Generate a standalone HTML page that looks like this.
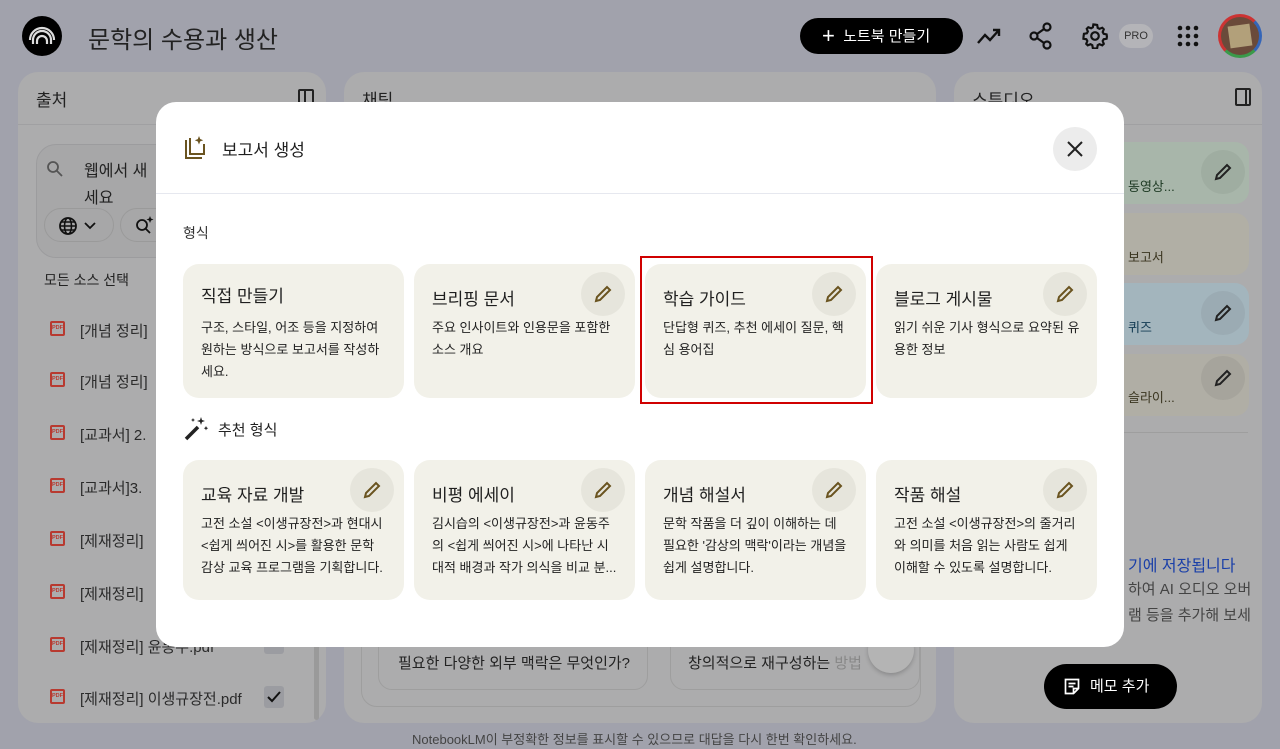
<!DOCTYPE html>
<html><head><meta charset="utf-8"><style>
*{box-sizing:border-box;margin:0;padding:0}
body{width:1280px;height:749px;overflow:hidden;background:#a1a2ac;font-family:"Liberation Sans","Noto Sans CJK KR",sans-serif;color:#1f1f1f;position:relative}
.abs{position:absolute}
.panel{position:absolute;background:#acacad;border-radius:20px;top:72px;height:651px}
.t{color:#222}
.card{position:absolute;background:#f2f1e9;border-radius:16px;width:221px}
.card h3{position:absolute;left:18px;top:18px;font-size:17px;font-weight:400;color:#1f1f1f}
.card p{position:absolute;left:18px;top:53px;right:16px;font-size:13px;line-height:22px;color:#222}
.pen{position:absolute;right:10px;top:8px;width:44px;height:44px;border-radius:50%;background:#e6e5dc}
.pen svg{position:absolute;left:12px;top:12px}
.pdf{position:absolute;left:50px;width:15px;height:15px;border:2px solid #b83a30;border-radius:2px;font-size:5.5px;color:#b83a30;font-weight:bold;line-height:11px;text-align:center;font-family:"Liberation Sans",sans-serif}
.src{position:absolute;left:80px;font-size:15px;color:#2a2a2a}
.sc{position:absolute;left:1124px;width:125px;height:62px;border-radius:0 14px 14px 0}
.sp{position:absolute;left:1201px;width:44px;height:44px;border-radius:50%}
.sp svg{position:absolute;left:12px;top:12px}
.sl{position:absolute;left:1128px;font-size:13px}
</style></head><body>
<!-- header -->
<div class="abs" style="left:22px;top:16px;width:40px;height:40px;border-radius:50%;background:#000">
<svg width="40" height="40" viewBox="0 0 40 40"><path d="M11 28v-4a9 9 0 0 1 18 0v4M15 28v-3a5 5 0 0 1 10 0v3M8 24a12 12 0 0 1 24 0" fill="none" stroke="#ddd" stroke-width="2.2"/></svg></div>
<div class="abs t" style="left:88px;top:20px;font-size:24px">문학의 수용과 생산</div>
<div class="abs" style="left:800px;top:18px;width:163px;height:36px;border-radius:18px;background:#000;color:#fff;font-size:15px;line-height:36px;padding-left:22px"><span style="font-size:22px;vertical-align:-2px">+</span>&nbsp; 노트북 만들기</div>
<svg class="abs" style="left:976px;top:24px" width="26" height="24" viewBox="0 0 26 24"><path d="M2 19l7-8 5 5 9-10M17 6h6v6" fill="none" stroke="#111" stroke-width="2.4"/></svg>
<svg class="abs" style="left:1028px;top:22px" width="26" height="28" viewBox="0 0 26 28"><circle cx="19" cy="5" r="3.5" fill="none" stroke="#111" stroke-width="2.2"/><circle cx="6" cy="14" r="3.5" fill="none" stroke="#111" stroke-width="2.2"/><circle cx="19" cy="23" r="3.5" fill="none" stroke="#111" stroke-width="2.2"/><path d="M9 12l7-5M9 16l7 5" stroke="#111" stroke-width="2.2"/></svg>
<svg class="abs" style="left:1082px;top:23px" width="26" height="26" viewBox="0 0 24 24"><path d="M12 1.5l2 .3.5 2.7 1.6.9 2.6-1 1.4 1.4-1 2.6.9 1.6 2.7.5.3 2-.3 2-2.7.5-.9 1.6 1 2.6-1.4 1.4-2.6-1-1.6.9-.5 2.7-2 .3-2-.3-.5-2.7-1.6-.9-2.6 1-1.4-1.4 1-2.6-.9-1.6-2.7-.5L1.5 12l.3-2 2.7-.5.9-1.6-1-2.6 1.4-1.4 2.6 1 1.6-.9.5-2.7z" fill="none" stroke="#111" stroke-width="2"/><circle cx="12" cy="12" r="3.5" fill="none" stroke="#111" stroke-width="2"/></svg>
<div class="abs" style="left:1119px;top:24px;width:34px;height:24px;border-radius:12px;background:#b4b4b8;font-size:11px;line-height:24px;text-align:center;color:#333">PRO</div>
<svg class="abs" style="left:1177px;top:25px" width="22" height="22"><g fill="#111"><circle cx="3" cy="3" r="2.3"/><circle cx="11" cy="3" r="2.3"/><circle cx="19" cy="3" r="2.3"/><circle cx="3" cy="11" r="2.3"/><circle cx="11" cy="11" r="2.3"/><circle cx="19" cy="11" r="2.3"/><circle cx="3" cy="19" r="2.3"/><circle cx="11" cy="19" r="2.3"/><circle cx="19" cy="19" r="2.3"/></g></svg>
<div class="abs" style="left:1218px;top:14px;width:44px;height:44px;border-radius:50%;border:3px solid #c33;border-right-color:#3465b8;border-bottom-color:#3a9a4a;background:#6a4a3a"><div style="margin:8px;width:22px;height:22px;background:#b2a07a;transform:rotate(-8deg)"></div></div>

<!-- left panel -->
<div class="panel" style="left:18px;width:308px">
<div class="abs t" style="left:18px;top:14px;font-size:17px">출처</div>
<div class="abs" style="left:280px;top:17px;width:16px;height:18px;border:2px solid #222;border-radius:2px"><div style="margin-left:4px;width:2px;height:14px;background:#222"></div></div>
<div class="abs" style="left:0;top:52px;width:308px;height:1px;background:#a0a0a2"></div>
<div class="abs" style="left:18px;top:72px;width:290px;height:114px;border-radius:20px;background:#a7a7a8;border:1px solid #9c9c9e"></div>
<svg class="abs" style="left:28px;top:88px" width="18" height="18" viewBox="0 0 18 18"><circle cx="7" cy="7" r="5" fill="none" stroke="#555" stroke-width="1.8"/><path d="M11 11l5 5" stroke="#555" stroke-width="1.8"/></svg>
<div class="abs t" style="left:66px;top:86px;font-size:16px;line-height:27px">웹에서 새<br>세요</div>
<div class="abs" style="left:26px;top:136px;width:70px;height:34px;border-radius:17px;border:1px solid #9a9a9a"></div>
<svg class="abs" style="left:40px;top:144px" width="20" height="20" viewBox="0 0 20 20"><circle cx="10" cy="10" r="8" fill="none" stroke="#111" stroke-width="1.8"/><ellipse cx="10" cy="10" rx="3.5" ry="8" fill="none" stroke="#111" stroke-width="1.6"/><path d="M2 10h16M3.5 6h13M3.5 14h13" stroke="#111" stroke-width="1.4"/></svg>
<svg class="abs" style="left:66px;top:150px" width="12" height="8"><path d="M1 1l5 5 5-5" fill="none" stroke="#111" stroke-width="1.8"/></svg>
<div class="abs" style="left:102px;top:136px;width:60px;height:34px;border-radius:17px;border:1px solid #9a9a9a"></div>
<svg class="abs" style="left:116px;top:143px" width="22" height="22" viewBox="0 0 22 22"><circle cx="8" cy="10" r="5" fill="none" stroke="#111" stroke-width="1.8"/><path d="M12 14l4 4" stroke="#111" stroke-width="1.8"/><path d="M16 1l1 2.5 2.5 1-2.5 1-1 2.5-1-2.5-2.5-1 2.5-1z" fill="#111"/></svg>
<div class="abs t" style="left:26px;top:198px;font-size:14px">모든 소스 선택</div>
<div class="abs" style="left:296px;top:560px;width:5px;height:88px;background:#9a9a9a;border-radius:3px"></div>
</div>
<div class="pdf" style="top:321px">PDF</div><div class="src" style="top:320px">[개념 정리]</div>
<div class="pdf" style="top:372px">PDF</div><div class="src" style="top:371px">[개념 정리]</div>
<div class="pdf" style="top:425px">PDF</div><div class="src" style="top:424px">[교과서] 2.</div>
<div class="pdf" style="top:478px">PDF</div><div class="src" style="top:477px">[교과서]3.</div>
<div class="pdf" style="top:531px">PDF</div><div class="src" style="top:530px">[제재정리]</div>
<div class="pdf" style="top:584px">PDF</div><div class="src" style="top:583px">[제재정리]</div>
<div class="pdf" style="top:637px">PDF</div><div class="src" style="top:636px">[제재정리] 윤동주.pdf</div>
<div class="abs" style="left:264px;top:640px;width:20px;height:14px;background:#9b9ca1;border-radius:0 0 3px 3px"></div>
<div class="pdf" style="top:689px">PDF</div><div class="src" style="top:688px">[제재정리] 이생규장전.pdf</div>
<div class="abs" style="left:264px;top:686px;width:20px;height:22px;background:#9b9ca1;border-radius:3px"><svg width="20" height="22"><path d="M4 11l4 4 8-9" fill="none" stroke="#111" stroke-width="2"/></svg></div>

<!-- chat panel -->
<div class="panel" style="left:344px;width:592px">
<div class="abs t" style="left:18px;top:14px;font-size:17px">채팅</div>
<div class="abs" style="left:17px;top:545px;width:560px;height:90px;border:1px solid #9e9e9e;border-radius:16px"></div>
<div class="abs" style="left:34px;top:560px;width:270px;height:58px;border:1px solid #9e9e9e;border-radius:14px"></div>
<div class="abs t" style="left:54px;top:580px;font-size:15px">필요한 다양한 외부 맥락은 무엇인가?</div>
<div class="abs" style="left:326px;top:560px;width:250px;height:58px;border:1px solid #9e9e9e;border-radius:14px"></div>
<div class="abs t" style="left:344px;top:580px;font-size:15px">창의적으로 재구성하는 <span style="color:#888">방법</span></div>
<div class="abs" style="left:524px;top:555px;width:46px;height:46px;border-radius:50%;background:#b4b4b4;box-shadow:0 2px 4px rgba(0,0,0,.2)"></div>
</div>
<div class="abs" style="left:412px;top:729px;font-size:13px;color:#444">NotebookLM이 부정확한 정보를 표시할 수 있으므로 대답을 다시 한번 확인하세요.</div>

<!-- studio panel -->
<div class="panel" style="left:954px;width:308px">
<div class="abs t" style="left:18px;top:14px;font-size:17px">스튜디오</div>
<div class="abs" style="left:281px;top:16px;width:16px;height:18px;border:2px solid #222;border-radius:2px"><div style="margin-left:8px;width:2px;height:14px;background:#222"></div></div>
<div class="abs" style="left:0;top:52px;width:308px;height:1px;background:#a0a0a2"></div>
<div class="abs" style="left:20px;top:360px;width:274px;height:1px;background:#9e9e9e"></div>
<div class="abs" style="left:174px;top:480px;font-size:16px;color:#1a3fa8">기에 저장됩니다</div>
<div class="abs" style="left:174px;top:505px;font-size:15px;color:#444;line-height:26px">하여 AI 오디오 오버<br>램 등을 추가해 보세</div>
<div class="abs" style="left:90px;top:592px;width:133px;height:45px;border-radius:23px;background:#000;color:#fff;font-size:15px;line-height:45px;padding-left:46px">메모 추가</div>
<svg class="abs" style="left:110px;top:606px" width="16" height="17" viewBox="0 0 16 17"><path d="M1.5 1.5h13v9l-5 5h-8z M9.5 15.5v-5h5M4.5 5.5h7M4.5 8.5h5" fill="none" stroke="#fff" stroke-width="1.7"/></svg>
</div>
<div class="sc" style="top:142px;background:#a8b6aa"></div>
<div class="sc" style="top:213px;background:#b1afa5"></div>
<div class="sc" style="top:283px;background:#a3b5bd"></div>
<div class="sc" style="top:354px;background:#b0aea5"></div>
<div class="sl" style="top:176px;color:#1e3a24">동영상...</div>
<div class="sl" style="top:247px;color:#3a3520">보고서</div>
<div class="sl" style="top:317px;color:#123a52">퀴즈</div>
<div class="sl" style="top:387px;color:#3a3520">슬라이...</div>
<div class="sp" style="top:150px;background:#9fada1"><svg width="20" height="20" viewBox="0 0 20 20"><path d="M3 17l1-4L14 3l3 3L7 16z" fill="none" stroke="#222" stroke-width="2"/></svg></div>
<div class="sp" style="top:291px;background:#9babb3"><svg width="20" height="20" viewBox="0 0 20 20"><path d="M3 17l1-4L14 3l3 3L7 16z" fill="none" stroke="#222" stroke-width="2"/></svg></div>
<div class="sp" style="top:356px;background:#a6a49c"><svg width="20" height="20" viewBox="0 0 20 20"><path d="M3 17l1-4L14 3l3 3L7 16z" fill="none" stroke="#222" stroke-width="2"/></svg></div>

<!-- modal -->
<div class="abs" style="left:156px;top:102px;width:968px;height:545px;background:#fff;border-radius:20px">
<svg class="abs" style="left:28px;top:34px" width="24" height="24" viewBox="0 0 24 24"><path d="M2 4v18h16M6 2v16h14V8" fill="none" stroke="#6a5420" stroke-width="2"/><path d="M15 0l1.2 3 3 1.2-3 1.2L15 8.5l-1.2-3-3-1.2 3-1.2z" fill="#6a5420"/></svg>
<div class="abs" style="left:66px;top:34px;font-size:17px">보고서 생성</div>
<div class="abs" style="left:897px;top:25px;width:44px;height:44px;border-radius:50%;background:#ececec"><svg width="44" height="44"><path d="M15 15l14 14M29 15l-14 14" stroke="#222" stroke-width="2"/></svg></div>
<div class="abs" style="left:0;top:91px;width:968px;height:1px;background:#e6e8ef"></div>
<div class="abs" style="left:27px;top:121px;font-size:14px;color:#333">형식</div>
<svg class="abs" style="left:27px;top:314px" width="26" height="26" viewBox="0 0 26 26"><path d="M3 23l12-12" stroke="#222" stroke-width="3.5"/><path d="M18 1l1 3 3 1-3 1-1 3-1-3-3-1 3-1zM23 10l.7 1.5 1.5.7-1.5.7-.7 1.5-.7-1.5-1.5-.7 1.5-.7zM10 2l.6 1.4 1.4.6-1.4.6L10 6l-.6-1.4L8 4l1.4-.6z" fill="#222"/></svg>
<div class="abs" style="left:62px;top:317px;font-size:15px;color:#222">추천 형식</div>
</div>
<div class="abs" style="left:640px;top:256px;width:233px;height:148px;border:2px solid #d00000"></div>

<div class="card" style="left:183px;top:264px;height:134px"><h3>직접 만들기</h3><p>구조, 스타일, 어조 등을 지정하여 원하는 방식으로 보고서를 작성하세요.</p></div>
<div class="card" style="left:414px;top:264px;height:134px"><h3 style="top:21px">브리핑 문서</h3><div class="pen"><svg width="20" height="20" viewBox="0 0 20 20"><path d="M3 17l1-4L14 3l3 3L7 16z" fill="none" stroke="#6a5420" stroke-width="2"/></svg></div><p>주요 인사이트와 인용문을 포함한 소스 개요</p></div>
<div class="card" style="left:645px;top:264px;height:134px"><h3 style="top:21px">학습 가이드</h3><div class="pen"><svg width="20" height="20" viewBox="0 0 20 20"><path d="M3 17l1-4L14 3l3 3L7 16z" fill="none" stroke="#6a5420" stroke-width="2"/></svg></div><p>단답형 퀴즈, 추천 에세이 질문, 핵심 용어집</p></div>
<div class="card" style="left:876px;top:264px;height:134px"><h3 style="top:21px">블로그 게시물</h3><div class="pen"><svg width="20" height="20" viewBox="0 0 20 20"><path d="M3 17l1-4L14 3l3 3L7 16z" fill="none" stroke="#6a5420" stroke-width="2"/></svg></div><p>읽기 쉬운 기사 형식으로 요약된 유용한 정보</p></div>

<div class="card" style="left:183px;top:460px;height:140px"><h3 style="top:21px">교육 자료 개발</h3><div class="pen"><svg width="20" height="20" viewBox="0 0 20 20"><path d="M3 17l1-4L14 3l3 3L7 16z" fill="none" stroke="#6a5420" stroke-width="2"/></svg></div><p>고전 소설 &lt;이생규장전&gt;과 현대시 &lt;쉽게 씌어진 시&gt;를 활용한 문학 감상 교육 프로그램을 기획합니다.</p></div>
<div class="card" style="left:414px;top:460px;height:140px"><h3 style="top:21px">비평 에세이</h3><div class="pen"><svg width="20" height="20" viewBox="0 0 20 20"><path d="M3 17l1-4L14 3l3 3L7 16z" fill="none" stroke="#6a5420" stroke-width="2"/></svg></div><p style="height:66px;overflow:hidden">김시습의 &lt;이생규장전&gt;과 윤동주의 &lt;쉽게 씌어진 시&gt;에 나타난 시대적 배경과 작가 의식을 비교 분...</p></div>
<div class="card" style="left:645px;top:460px;height:140px"><h3 style="top:21px">개념 해설서</h3><div class="pen"><svg width="20" height="20" viewBox="0 0 20 20"><path d="M3 17l1-4L14 3l3 3L7 16z" fill="none" stroke="#6a5420" stroke-width="2"/></svg></div><p>문학 작품을 더 깊이 이해하는 데 필요한 '감상의 맥락'이라는 개념을 쉽게 설명합니다.</p></div>
<div class="card" style="left:876px;top:460px;height:140px"><h3 style="top:21px">작품 해설</h3><div class="pen"><svg width="20" height="20" viewBox="0 0 20 20"><path d="M3 17l1-4L14 3l3 3L7 16z" fill="none" stroke="#6a5420" stroke-width="2"/></svg></div><p>고전 소설 &lt;이생규장전&gt;의 줄거리와 의미를 처음 읽는 사람도 쉽게 이해할 수 있도록 설명합니다.</p></div>
</body></html>
